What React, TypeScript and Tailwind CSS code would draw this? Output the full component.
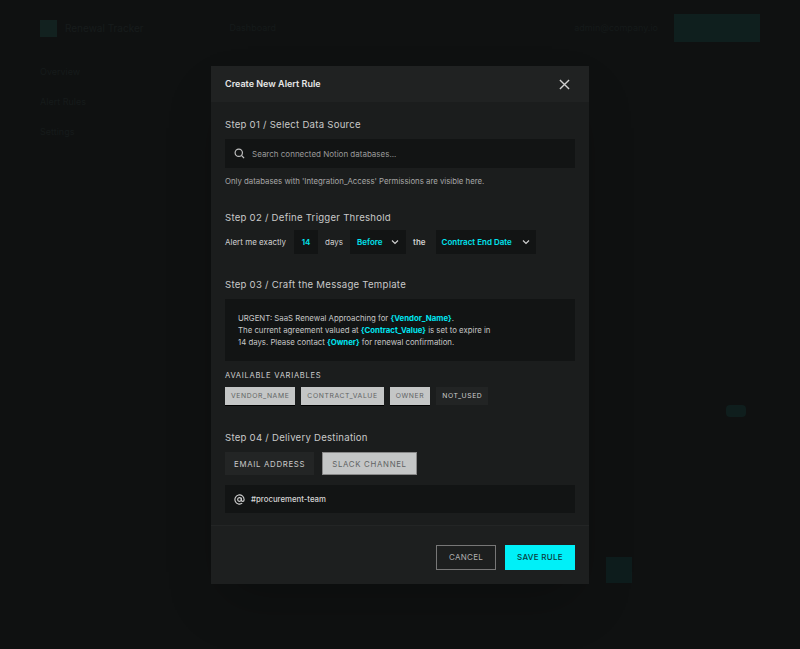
import React from "react";

export default function App() {
  const cyan = "text-[#00e5f0]";
  return (
    <div className="relative w-[800px] h-[649px] bg-[#0f1111] overflow-hidden" style={{ fontFamily: "Inter, 'Noto Sans', sans-serif" }}>
      {/* dim background app */}
      <div className="flex items-center h-[56px] px-[40px] gap-4">
        <div className="w-[17px] h-[17px] bg-[#12211f]" />
        <span className="text-[10px] text-[#171c1c] -ml-2">Renewal Tracker</span>
        <span className="ml-[70px] text-[9px] text-[#151a1a]">Dashboard</span>
        <div className="flex-1" />
        <span className="text-[9px] text-[#151a1a]">admin@company.io</span>
        <div className="w-[86px] h-[28px] bg-[#0f1f1e]" />
      </div>
      <div className="absolute left-[40px] top-[65px] flex flex-col gap-[12px] text-[9px] text-[#161b1b]">
        <div className="w-[130px] h-[18px]">Overview</div>
        <div className="w-[130px] h-[18px]">Alert Rules</div>
        <div className="w-[130px] h-[18px]">Settings</div>
      </div>
      <div className="absolute left-[606px] top-[557px] w-[26px] h-[26px] bg-[#0e1d1d]" />
      <div className="absolute left-[726px] top-[405px] w-[20px] h-[12px] rounded bg-[#0f1e1d]" />

      {/* modal */}
      <div className="absolute left-[211px] top-[66px] w-[378px] h-[518px] bg-[#1b1d1d] flex flex-col shadow-2xl">
        <div className="h-[36px] bg-[#202222] flex items-center justify-between px-[14px]">
          <span className="text-[9px] font-semibold text-[#e6e6e6] leading-[12px]">Create New Alert Rule</span>
          <svg width="11" height="11" viewBox="0 0 12 12" className="mr-[5px]"><path d="M1 1L11 11M11 1L1 11" stroke="#d0d0d0" strokeWidth="1.5" /></svg>
        </div>
        <div className="flex-1 px-[14px] pt-[15px] flex flex-col text-[#c9c9c9]">
          <div className="text-[9.6px] tracking-[0.25px] leading-[16px]">Step 01 / Select Data Source</div>
          <div className="mt-[6px] h-[29px] bg-[#121414] flex items-center px-[9px] gap-[7px]">
            <svg width="11" height="11" viewBox="0 0 12 12"><circle cx="5.2" cy="5.2" r="4" fill="none" stroke="#c0c0c0" strokeWidth="1.3" /><path d="M8.2 8.2L11 11" stroke="#c0c0c0" strokeWidth="1.3" /></svg>
            <span className="text-[8px] leading-[12px] text-[#9a9a9a]">Search connected Notion databases...</span>
          </div>
          <div className="mt-[7px] text-[7.8px] leading-[12px] text-[#a6a6a6]">Only databases with 'Integration_Access' Permissions are visible here.</div>

          <div className="mt-[23px] text-[9.6px] tracking-[0.25px] leading-[16px]">Step 02 / Define Trigger Threshold</div>
          <div className="mt-[4px] flex items-center text-[8px] leading-[12px] text-[#d0d0d0] whitespace-nowrap">
            <span>Alert me exactly</span>
            <span className={`ml-[8px] h-[24px] w-[24px] bg-[#121414] flex items-center justify-center font-semibold ${cyan}`}>14</span>
            <span className="ml-[7px]">days</span>
            <span className={`ml-[7px] h-[24px] w-[56px] bg-[#121414] flex items-center justify-between px-[7px] font-semibold ${cyan}`}>Before
              <svg width="8" height="6" viewBox="0 0 8 6"><path d="M1 1.5L4 4.5L7 1.5" stroke="#d0d0d0" strokeWidth="1.2" fill="none" /></svg></span>
            <span className="ml-[7px] font-semibold">the</span>
            <span className={`ml-[10px] h-[24px] w-[100px] bg-[#121414] flex items-center justify-between px-[6px] font-semibold ${cyan}`}>Contract End Date
              <svg width="8" height="6" viewBox="0 0 8 6"><path d="M1 1.5L4 4.5L7 1.5" stroke="#d0d0d0" strokeWidth="1.2" fill="none" /></svg></span>
          </div>

          <div className="mt-[23px] text-[9.6px] tracking-[0.25px] leading-[16px]">Step 03 / Craft the Message Template</div>
          <div className="mt-[6px] h-[62px] bg-[#121414] px-[13px] flex flex-col justify-center text-[7.8px] leading-[12px] text-[#c6c6c6]">
            <div>URGENT: SaaS Renewal Approaching for <b className={cyan}>{"{Vendor_Name}"}</b>.</div>
            <div>The current agreement valued at <b className={cyan}>{"{Contract_Value}"}</b> is set to expire in</div>
            <div>14 days. Please contact <b className={cyan}>{"{Owner}"}</b> for renewal confirmation.</div>
          </div>
          <div className="mt-[9px] text-[7.6px] leading-[12px] tracking-[0.7px] text-[#cfcfcf]">AVAILABLE VARIABLES</div>
          <div className="mt-[5px] flex gap-[6px] text-[6.8px] leading-[10px] tracking-[0.6px]">
            <span className="h-[18px] px-[6px] flex items-center bg-[#c4c6c6] text-[#5f6363] shadow-[0_1px_0_#000]">VENDOR_NAME</span>
            <span className="h-[18px] px-[6px] flex items-center bg-[#c4c6c6] text-[#5f6363] shadow-[0_1px_0_#000]">CONTRACT_VALUE</span>
            <span className="h-[18px] px-[6px] flex items-center bg-[#c4c6c6] text-[#5f6363] shadow-[0_1px_0_#000]">OWNER</span>
            <span className="h-[18px] px-[6px] flex items-center bg-[#222424] text-[#cfcfcf]">NOT_USED</span>
          </div>

          <div className="mt-[25px] text-[9.6px] tracking-[0.25px] leading-[16px]">Step 04 / Delivery Destination</div>
          <div className="mt-[6px] flex gap-[8px] text-[7.8px] leading-[10px] tracking-[0.7px]">
            <span className="h-[23px] px-[9px] flex items-center bg-[#232525] text-[#c9c9c9]">EMAIL ADDRESS</span>
            <span className="h-[23px] px-[9px] flex items-center bg-[#c4c6c6] text-[#5f6363] border border-[#888]">SLACK CHANNEL</span>
          </div>
          <div className="mt-[10px] h-[28px] bg-[#121414] flex items-center px-[9px] gap-[6px]">
            <svg width="11" height="11" viewBox="0 0 24 24" fill="none" stroke="#d0d0d0" strokeWidth="2.4"><circle cx="12" cy="12" r="4" /><path d="M16 8v5a3 3 0 0 0 6 0v-1a10 10 0 1 0-4 8" /></svg>
            <span className="text-[7.8px] leading-[12px] text-[#d6d6d6] font-medium">#procurement-team</span>
          </div>
        </div>
        <div className="h-[59px] bg-[#1d1f1f] border-t border-[#232525] flex items-center justify-end gap-[9px] px-[14px] text-[8px] leading-[12px]">
          <span className="h-[25px] w-[60px] border border-[#777] flex items-center justify-center text-[#b0b0b0] tracking-[0.3px] mt-[4px]">CANCEL</span>
          <span className="h-[25px] w-[70px] bg-[#00f0f8] flex items-center justify-center text-[#0b3a3c] font-medium tracking-[0.3px] mt-[4px]">SAVE RULE</span>
        </div>
      </div>
    </div>
  );
}
